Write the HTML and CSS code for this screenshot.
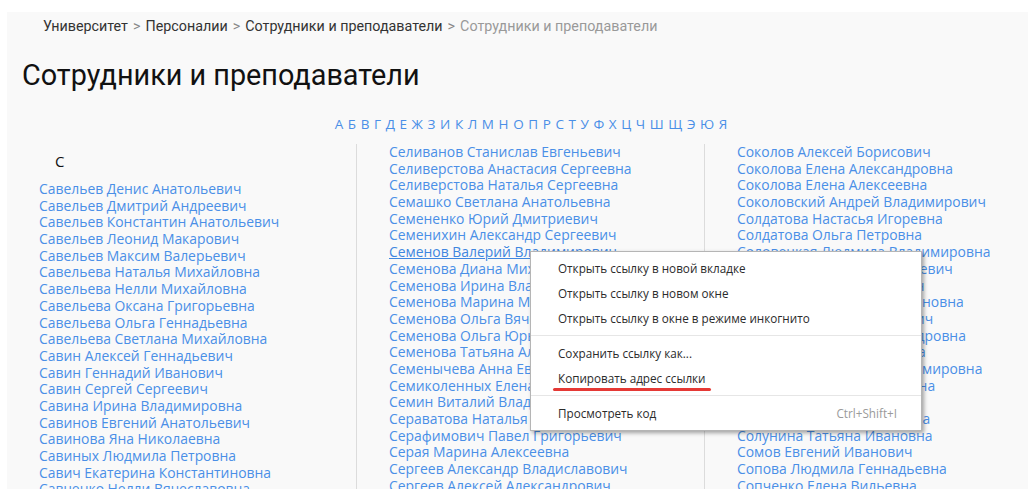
FILE: index.html
```html
<!DOCTYPE html>
<html lang="ru">
<head>
<meta charset="utf-8">
<title>Сотрудники и преподаватели</title>
<link rel="stylesheet" href="styles.css">
</head>
<body>
<div class="page">
  <nav class="crumbs">
    <a href="#">Университет</a><span class="sep">&gt;</span><a href="#">Персоналии</a><span class="sep">&gt;</span><a href="#">Сотрудники и преподаватели</a><span class="sep">&gt;</span><span class="current">Сотрудники и преподаватели</span>
  </nav>

  <h1 class="title">Сотрудники и преподаватели</h1>

  <div class="alphabet">
    <a href="#">А</a><a href="#">Б</a><a href="#">В</a><a href="#">Г</a><a href="#">Д</a><a href="#">Е</a><a href="#">Ж</a><a href="#">З</a><a href="#">И</a><a href="#">К</a><a href="#">Л</a><a href="#">М</a><a href="#">Н</a><a href="#">О</a><a href="#">П</a><a href="#">Р</a><a href="#">С</a><a href="#">Т</a><a href="#">У</a><a href="#">Ф</a><a href="#">Х</a><a href="#">Ц</a><a href="#">Ч</a><a href="#">Ш</a><a href="#">Щ</a><a href="#">Э</a><a href="#">Ю</a><a href="#">Я</a>
  </div>

  <div class="columns">
    <div class="col">
      <div class="letter">С</div>
      <ul class="people">
        <li><a href="#">Савельев Денис Анатольевич</a></li>
        <li><a href="#">Савельев Дмитрий Андреевич</a></li>
        <li><a href="#">Савельев Константин Анатольевич</a></li>
        <li><a href="#">Савельев Леонид Макарович</a></li>
        <li><a href="#">Савельев Максим Валерьевич</a></li>
        <li><a href="#">Савельева Наталья Михайловна</a></li>
        <li><a href="#">Савельева Нелли Михайловна</a></li>
        <li><a href="#">Савельева Оксана Григорьевна</a></li>
        <li><a href="#">Савельева Ольга Геннадьевна</a></li>
        <li><a href="#">Савельева Светлана Михайловна</a></li>
        <li><a href="#">Савин Алексей Геннадьевич</a></li>
        <li><a href="#">Савин Геннадий Иванович</a></li>
        <li><a href="#">Савин Сергей Сергеевич</a></li>
        <li><a href="#">Савина Ирина Владимировна</a></li>
        <li><a href="#">Савинов Евгений Анатольевич</a></li>
        <li><a href="#">Савинова Яна Николаевна</a></li>
        <li><a href="#">Савиных Людмила Петровна</a></li>
        <li><a href="#">Савич Екатерина Константиновна</a></li>
        <li><a href="#">Савченко Нелли Вячеславовна</a></li>
      </ul>
    </div>
    <div class="col">
      <ul class="people">
        <li><a href="#">Селиванов Станислав Евгеньевич</a></li>
        <li><a href="#">Селиверстова Анастасия Сергеевна</a></li>
        <li><a href="#">Селиверстова Наталья Сергеевна</a></li>
        <li><a href="#">Семашко Светлана Анатольевна</a></li>
        <li><a href="#">Семененко Юрий Дмитриевич</a></li>
        <li><a href="#">Семенихин Александр Сергеевич</a></li>
        <li><a href="#" class="hover">Семенов Валерий Владимирович</a></li>
        <li><a href="#">Семенова Диана Михайловна</a></li>
        <li><a href="#">Семенова Ирина Владимировна</a></li>
        <li><a href="#">Семенова Марина Михайловна</a></li>
        <li><a href="#">Семенова Ольга Вячеславовна</a></li>
        <li><a href="#">Семенова Ольга Юрьевна</a></li>
        <li><a href="#">Семенова Татьяна Александровна</a></li>
        <li><a href="#">Семенычева Анна Евгеньевна</a></li>
        <li><a href="#">Семиколенных Елена Викторовна</a></li>
        <li><a href="#">Семин Виталий Владимирович</a></li>
        <li><a href="#">Сераватова Наталья Сергеевна</a></li>
        <li><a href="#">Серафимович Павел Григорьевич</a></li>
        <li><a href="#">Серая Марина Алексеевна</a></li>
        <li><a href="#">Сергеев Александр Владиславович</a></li>
        <li><a href="#">Сергеев Алексей Александрович</a></li>
      </ul>
    </div>
    <div class="col">
      <ul class="people">
        <li><a href="#">Соколов Алексей Борисович</a></li>
        <li><a href="#">Соколова Елена Александровна</a></li>
        <li><a href="#">Соколова Елена Алексеевна</a></li>
        <li><a href="#">Соколовский Андрей Владимирович</a></li>
        <li><a href="#">Солдатова Настасья Игоревна</a></li>
        <li><a href="#">Солдатова Ольга Петровна</a></li>
        <li><a href="#">Соловецкая Людмила Владимировна</a></li>
        <li><a href="#">Соловьев Александр Сергеевич</a></li>
        <li><a href="#">Соловьев Андрей Юрьевич</a></li>
        <li><a href="#">Соловьева Анна Константиновна</a></li>
        <li><a href="#">Соловьев Игорь Викторович</a></li>
        <li><a href="#">Соловьева Ирина Александровна</a></li>
        <li><a href="#">Соловьева Ольга Ивановна</a></li>
        <li><a href="#">Соловьева Светлана Владимировна</a></li>
        <li><a href="#">Соловьева Татьяна Юрьевна</a></li>
        <li><a href="#">Солодов Иван Ильич</a></li>
        <li><a href="#">Солонина Ирина Андреевна</a></li>
        <li><a href="#">Солунина Татьяна Ивановна</a></li>
        <li><a href="#">Сомов Евгений Иванович</a></li>
        <li><a href="#">Сопова Людмила Геннадьевна</a></li>
        <li><a href="#">Сопченко Елена Вильевна</a></li>
      </ul>
    </div>
  </div>

  <div class="menu">
    <div class="menu-item">Открыть ссылку в новой вкладке</div>
    <div class="menu-item">Открыть ссылку в новом окне</div>
    <div class="menu-item">Открыть ссылку в окне в режиме инкогнито</div>
    <div class="menu-sep"></div>
    <div class="menu-item">Сохранить ссылку как...</div>
    <div class="menu-item marked">Копировать адрес ссылки</div>
    <div class="menu-sep"></div>
    <div class="menu-item"><span>Просмотреть код</span><span class="shortcut">Ctrl+Shift+I</span></div>
  </div>
</div>
</body>
</html>
```

FILE: styles.css
```css
html, body {
  margin: 0;
  height: 100%;
  overflow: hidden;
  background: #ffffff;
}

.page {
  position: relative;
  margin: 12px 0 0 7px;
  min-height: 600px;
  background: #f9f9f9;
  font-family: "Open Sans", "DejaVu Sans", sans-serif;
}

a {
  text-decoration: none;
}

/* breadcrumb trail */
.crumbs {
  padding: 4px 0 0 36px;
  height: 19px;
  line-height: 20px;
  font-family: "Roboto", "Open Sans", sans-serif;
  font-size: 14.3px;
  color: #333;
}
.crumbs a {
  color: #333;
}
.crumbs .sep {
  color: #888;
  margin: 0 5px;
}
.crumbs .current {
  color: #999;
}

.title {
  margin: 0;
  padding: 23px 0 0 15px;
  height: 34px;
  line-height: 34px;
  font-family: "Roboto", "Open Sans", sans-serif;
  font-weight: 400;
  font-size: 28.8px;
  color: #111;
}

/* letter index */
.alphabet {
  display: flex;
  justify-content: center;
  gap: 4.6px;
  margin-top: 22px;
  padding-left: 27px;
  height: 20px;
  line-height: 20px;
  font-size: 13.5px;
}
.alphabet a {
  color: #4a8fe7;
}

/* three columns of names */
.columns {
  display: grid;
  grid-template-columns: 350px 348px 1fr;
  margin-top: 10px;
}
.col {
  padding-left: 32px;
  border-right: 1px solid #dcdcdc;
  min-height: 400px;
}
.col:last-child {
  border-right: none;
}
.letter {
  margin: 7px 0 10px 16px;
  height: 20px;
  line-height: 20px;
  font-size: 15px;
  color: #111;
}
.people {
  list-style: none;
  margin: 0;
  padding: 0;
}
.people li {
  height: 16.7px;
  line-height: 16.7px;
  font-size: 13.9px;
  white-space: nowrap;
}
.people a {
  color: #4a8fe7;
}
.people a.hover {
  color: #3f86e0;
  text-decoration: underline;
}

/* browser context menu */
.menu {
  position: absolute;
  left: 523px;
  top: 239px;
  width: 390px;
  padding: 4px 0;
  background: #fff;
  border: 1px solid #b5b5b5;
  box-shadow: 2px 2px 4px rgba(0, 0, 0, 0.35);
  font-family: "Open Sans", "DejaVu Sans", sans-serif;
  font-size: 11.7px;
  color: #2b2b2b;
}
.menu-item {
  position: relative;
  display: flex;
  justify-content: space-between;
  height: 25px;
  line-height: 25px;
  padding: 0 24px 0 27px;
}
.menu-item .shortcut {
  color: #9a9a9a;
}
.menu-sep {
  height: 1px;
  margin: 4px 0 5px;
  background: #e6e6e6;
}
.menu-item.marked::after {
  content: "";
  position: absolute;
  left: 22px;
  top: 22px;
  width: 158px;
  height: 3px;
  border-radius: 2px;
  background: #e53935;
}
```
